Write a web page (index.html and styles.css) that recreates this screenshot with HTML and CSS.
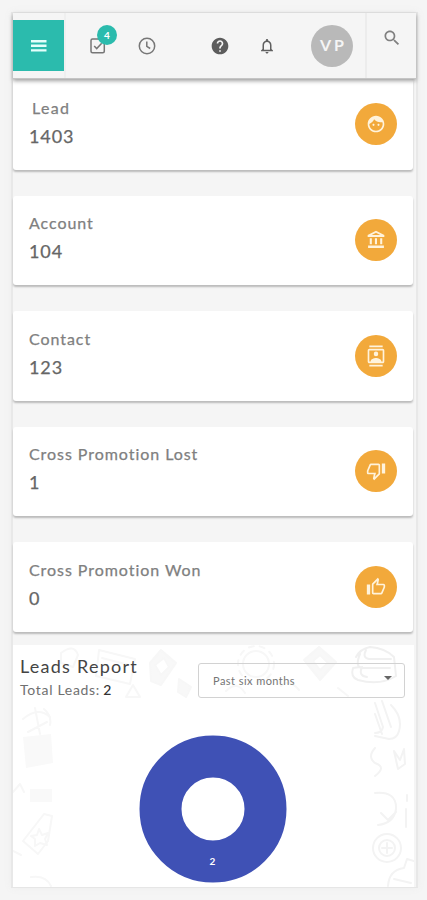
FILE: index.html
```html
<!DOCTYPE html>
<html lang="en">
<head>
<meta charset="utf-8">
<title>Dashboard</title>
<link rel="stylesheet" href="styles.css">
</head>
<body>
<main class="frame">
  <header class="bar">
    <div class="menu"><svg width="16" height="12" viewBox="0 0 16 12" fill="#e4fffb"><path d="M0 0h15.500v2.400H0zM0 4.600h15.500V7H0zM0 9.200h15.500v2.400H0z"/></svg></div>
    <div class="tools">
      <div class="tasks">
        <svg width="16" height="16" viewBox="0 0 16 16" fill="none" stroke="#777" stroke-width="1.500"><rect x="1" y="1" width="13.300" height="13.800" rx="1.500"/><path d="M4.200 8l2.500 2.600 5-5.300"/></svg>
        <span class="badge">4</span>
      </div>
      <svg class="clock" width="18" height="18" viewBox="0 0 18 18" fill="none" stroke="#777" stroke-width="1.500"><circle cx="9" cy="9" r="7.700"/><path d="M8.800 4.500v4.900l3.400 2.100"/></svg>
      <svg class="help" width="20" height="20" viewBox="0 0 24 24" fill="#5c5c5c"><path d="M12 2C6.480 2 2 6.480 2 12s4.480 10 10 10 10-4.480 10-10S17.520 2 12 2zm1 17h-2v-2h2v2zm2.070-7.750l-.9.920C13.450 12.900 13 13.500 13 15h-2v-.5c0-1.100.45-2.100 1.170-2.830l1.240-1.260c.37-.36.59-.86.59-1.410 0-1.100-.9-2-2-2s-2 .9-2 2H8c0-2.210 1.790-4 4-4s4 1.790 4 4c0 .88-.36 1.680-.93 2.250z"/></svg>
      <svg class="bell" width="18" height="18" viewBox="0 0 24 24" fill="#606060"><path d="M12 22c1.100 0 2-.9 2-2h-4c0 1.100.9 2 2 2zm6-6v-5c0-3.070-1.630-5.640-4.500-6.320V4c0-.83-.67-1.500-1.500-1.500s-1.500.67-1.500 1.500v.68C7.640 5.360 6 7.920 6 11v5l-2 2v1h16v-1l-2-2zm-2 1H8v-6c0-2.480 1.510-4.500 4-4.500s4 2.020 4 4.500v6z"/></svg>
      <div class="avatar">VP</div>
    </div>
    <div class="search"><svg width="20" height="20" viewBox="0 0 24 24" fill="#808080"><path d="M15.500 14h-.79l-.28-.27C15.410 12.590 16 11.110 16 9.500 16 5.910 13.090 3 9.500 3S3 5.910 3 9.500 5.910 16 9.500 16c1.610 0 3.090-.59 4.230-1.570l.27.28v.79l5 4.990L20.490 19l-4.990-5zm-6 0C7.010 14 5 11.990 5 9.500S7.010 5 9.500 5 14 7.010 14 9.500 11.990 14 9.500 14z"/></svg></div>
  </header>

  <section class="cards">
    <article class="card">
      <div><h2 class="lead">Lead</h2><p>1403</p></div>
      <span class="disc"><svg width="20" height="20" viewBox="0 0 24 24"><path d="M10.250 13c0 .69-.56 1.250-1.250 1.250S7.750 13.690 7.750 13s.56-1.250 1.250-1.250 1.250.56 1.250 1.250zM15 11.750c-.69 0-1.250.56-1.250 1.250s.56 1.250 1.250 1.250 1.250-.56 1.250-1.250-.56-1.250-1.250-1.250zM22 12c0 5.520-4.480 10-10 10S2 17.520 2 12 6.480 2 12 2s10 4.480 10 10zm-2 0c0-.78-.12-1.530-.33-2.240-.7.150-1.420.24-2.170.24-3.130 0-5.920-1.440-7.760-3.690C8.690 8.870 6.600 10.880 4 11.860c.01.040 0 .09 0 .14 0 4.410 3.590 8 8 8s8-3.590 8-8z"/></svg></span>
    </article>
    <article class="card">
      <div><h2>Account</h2><p>104</p></div>
      <span class="disc"><svg width="20" height="20" viewBox="0 0 24 24"><path fill-rule="evenodd" d="M7 10H4.500v7H7v-7zm6.200 0h-2.500v7h2.500v-7zm6.300 0H17v7h2.500v-7zM21.500 18.500h-19v3h19v-3zM12 1L2 6v2.500h20V6L12 1zm0 2.300L17.200 6H6.800z"/></svg></span>
    </article>
    <article class="card">
      <div><h2>Contact</h2><p>123</p></div>
      <span class="disc"><svg width="20" height="22" viewBox="0 0 24 24" preserveAspectRatio="none"><path fill-rule="evenodd" d="M4 .5h16v2H4zM4 21.500h16v2H4zM20 4H4c-1.100 0-2 .9-2 2v12c0 1.100.9 2 2 2h16c1.100 0 2-.9 2-2V6c0-1.100-.9-2-2-2zm0 14h-1.500c0-2.500-4-3.800-6.500-3.800S5.500 15.500 5.500 18H4V6h16zM12 7a2.700 2.700 0 1 0 0 5.400A2.700 2.700 0 0 0 12 7z"/></svg></span>
    </article>
    <article class="card">
      <div><h2>Cross Promotion Lost</h2><p>1</p></div>
      <span class="disc"><svg width="20" height="20" viewBox="0 0 24 24"><path d="M15 3H6c-.83 0-1.540.5-1.840 1.220l-3.020 7.050c-.09.230-.14.470-.14.730v2c0 1.100.9 2 2 2h6.310l-.95 4.570-.03.320c0 .41.17.79.44 1.060L9.830 23l6.590-6.590c.36-.36.58-.86.58-1.410V5c0-1.100-.9-2-2-2zm0 12l-4.340 4.340L12 14H3v-2l3-7h9v10zm4-12h4v12h-4z"/></svg></span>
    </article>
    <article class="card">
      <div><h2>Cross Promotion Won</h2><p>0</p></div>
      <span class="disc"><svg width="20" height="20" viewBox="0 0 24 24"><path d="M9 21h9c.83 0 1.540-.5 1.840-1.220l3.020-7.050c.09-.23.14-.47.14-.73v-2c0-1.100-.9-2-2-2h-6.310l.95-4.570.03-.32c0-.41-.17-.79-.44-1.060L14.170 1 7.580 7.590C7.220 7.950 7 8.450 7 9v10c0 1.100.9 2 2 2zM9 9l4.340-4.340L12 10h9v2l-3 7H9V9zM1 9h4v12H1z"/></svg></span>
    </article>
  </section>

  <section class="report">
    <svg class="doodles" width="401" height="242" viewBox="0 0 401 242" fill="none" stroke="#f7f7f7" stroke-width="2" stroke-linejoin="round" stroke-linecap="round">
      <path d="M86 5l36 9-5 25-34-8zM89 13l27 7M48 8q13-10 17 2l-5 12-12-4zM120 40l7 12h-14z"/>
      <path fill="#f8f8f8" d="M137 18l11-13 15 13-15 22-10-4zM166 34l12 8-5 10-8-5z"/>
      <path fill="#fff" d="M142 20l9-7 5 9-8 8z"/>
      <circle cx="243" cy="19" r="13"/><circle cx="243" cy="19" r="18" stroke-dasharray="5 6"/>
      <path fill="#f8f8f8" d="M291 15l15-13 17 15-16 18z"/>
      <path fill="#fff" d="M300 16l7-6 8 8-8 7z"/>
      <path d="M268 41q8-8 18 4M213 46q11-11 19 2M325 43l10 8"/>
      <path stroke="#f0f0f0" d="M343 12q4-8 14-10 15 1 24 10l2 19q-16 10-38 4-8-3-5-12l7-1M347 9q-5 12 1 14h29M353 5q-4 8 3 9h22M349 22q-4 9 5 10"/>
      <g stroke="#f3f3f3"><path d="M362 58l8 24q-1 6-8 6M369 56l9 26M378 60q12 12 8 26-2 8-10 8l-14-3M362 69l7 20M362 103q-8 9 0 15 12 4 0 13M381 106l6 9 4-11 1 15-7 5zM362 148q22-2 21 16-2 14-18 16M368 168l7 7 8-8M393 164v18M394 150v6M375 241q1-16 16-18l3-9 7 2M381 234l17 4"/><circle cx="374" cy="203" r="8"/><circle cx="374" cy="203" r="14"/><path d="M369 203h10M374 198v10"/></g>
      <path d="M10 74q15-13 27-2M15 87l19-10M22 63l5 26M31 64q8 7 6 16M0 147l7-8 4 8M10 196l21-27 8 2-4 25-10 13zM26 184l3 6 6-2-3 6 2 6-7-2-5 3v-7l-4-3 6-1zM0 206l8 4M18 232q15-2 20 9"/>
      <path fill="#f9f9f9" stroke="none" d="M10 92l28-3 2 29-27 5zM17 144h22v13H17z"/>
    </svg>
    <div class="report-head">
      <div class="report-title"><h1>Leads Report</h1><p>Total Leads: <b>2</b></p></div>
      <div class="select"><span>Past six months</span><i></i></div>
    </div>
    <div class="chart"><svg width="148" height="148" viewBox="0 0 148 148"><circle cx="74" cy="74" r="52.500" fill="none" stroke="#3f51b5" stroke-width="42"/><text x="73.500" y="130" class="value">2</text></svg></div>
  </section>
</main>
</body>
</html>
```
FILE: styles.css
```css
* { box-sizing: border-box; }
body {
  margin: 0;
  padding: 12px 9px 0 11px;
  height: 900px;
  overflow: hidden;
  background: #f5f5f5;
  font-family: Lato, "Open Sans", sans-serif;
}
h1, h2, p { margin: 0; font-weight: 400; }
svg { display: block; }
.frame {
  width: 407px;
  height: 876px;
  border: 1px solid #e6e6e6;
  border-left: 2px solid #e8e8e8;
  border-right: 2px solid #e8e8e8;
  background: #f5f5f5;
  box-shadow: 0 0 8px #eee;
}
.bar {
  position: relative;
  display: flex;
  height: 66px;
  background: #f5f5f5;
  border-bottom: 1px solid #c5c5c5;
  box-shadow: 0 2px 4px rgba(0, 0, 0, .38);
}
.menu {
  width: 51px;
  height: 51px;
  margin-top: 7px;
  display: grid;
  place-items: center;
  background: #2bbbad;
}
.tools {
  width: 303px;
  border-left: 2px solid #efefef;
  border-right: 2px solid #ececec;
  display: flex;
  align-items: center;
}
.tasks { position: relative; margin-left: 24px; }
.badge {
  position: absolute;
  left: 7px;
  top: -13px;
  width: 20px;
  height: 20px;
  border-radius: 50%;
  background: #2bbbad;
  color: #fff;
  font: 700 10px/20px Lato, sans-serif;
  text-align: center;
}
.clock { margin-left: 32px; }
.help { margin-left: 54px; }
.bell { margin-left: 28px; }
.avatar {
  width: 42px;
  height: 42px;
  margin-left: 35px;
  border-radius: 50%;
  background: #b9b9b9;
  color: #f5f5f5;
  font-size: 16px;
  font-weight: 700;
  line-height: 40px;
  letter-spacing: 3px;
  text-indent: 3px;
  text-align: center;
}
.search { padding: 15px 0 0 15px; }
.cards { display: grid; gap: 26px; width: 400px; }
.card {
  height: 89.500px;
  padding: 0 16px;
  display: flex;
  justify-content: space-between;
  align-items: center;
  background: #fff;
  border-radius: 3px;
  box-shadow: 0 2px 2px rgba(0, 0, 0, .24);
}
.card:first-child { height: 90.500px; }
.card:first-child > div { padding-bottom: 5px; }
.card:first-child .lead { padding-left: 3px; letter-spacing: 1.300px; }
.card h2 { color: #808080; font-size: 16px; line-height: 29px; letter-spacing: .95px; -webkit-text-stroke: .25px #808080; }
.card p { color: #666; font-size: 18px; line-height: 29px; letter-spacing: .9px; -webkit-text-stroke: .25px #666; }
.card > div { padding-bottom: 6px; }
.disc {
  width: 42px;
  height: 42px;
  border-radius: 50%;
  display: grid;
  place-items: center;
  background: #f2a93b;
}
.disc svg { fill: #fff3dc; }
.report {
  position: relative;
  width: 401px;
  height: 242px;
  margin-top: 13.500px;
  background: #fff;
}
.doodles { position: absolute; left: 0; top: 0; }
.report-head {
  position: relative;
  display: flex;
  justify-content: space-between;
  padding: 9px 9px 0 7px;
}
.report h1 { color: #444; font-size: 18px; line-height: 25px; letter-spacing: 1.250px; }
.report-title p { color: #707070; font-size: 14px; line-height: 22px; letter-spacing: .7px; }
.report-title b { color: #333; font-weight: 500; margin-left: -1px; }
.select {
  width: 207px;
  height: 35px;
  margin-top: 9px;
  padding: 0 12px 0 14px;
  border: 1px solid #d2d2d2;
  border-radius: 3px;
  display: flex;
  align-items: center;
  justify-content: space-between;
  color: #757575;
  font-size: 11px;
  letter-spacing: .45px;
}
.select i {
  border: 4px solid transparent;
  border-top-color: #666;
  border-bottom: 0;
  margin-top: -5px;
}
.chart { position: relative; margin: 34px 0 0 126px; }
.value { fill: #fff; font: 700 10px Lato, sans-serif; text-anchor: middle; }
```
